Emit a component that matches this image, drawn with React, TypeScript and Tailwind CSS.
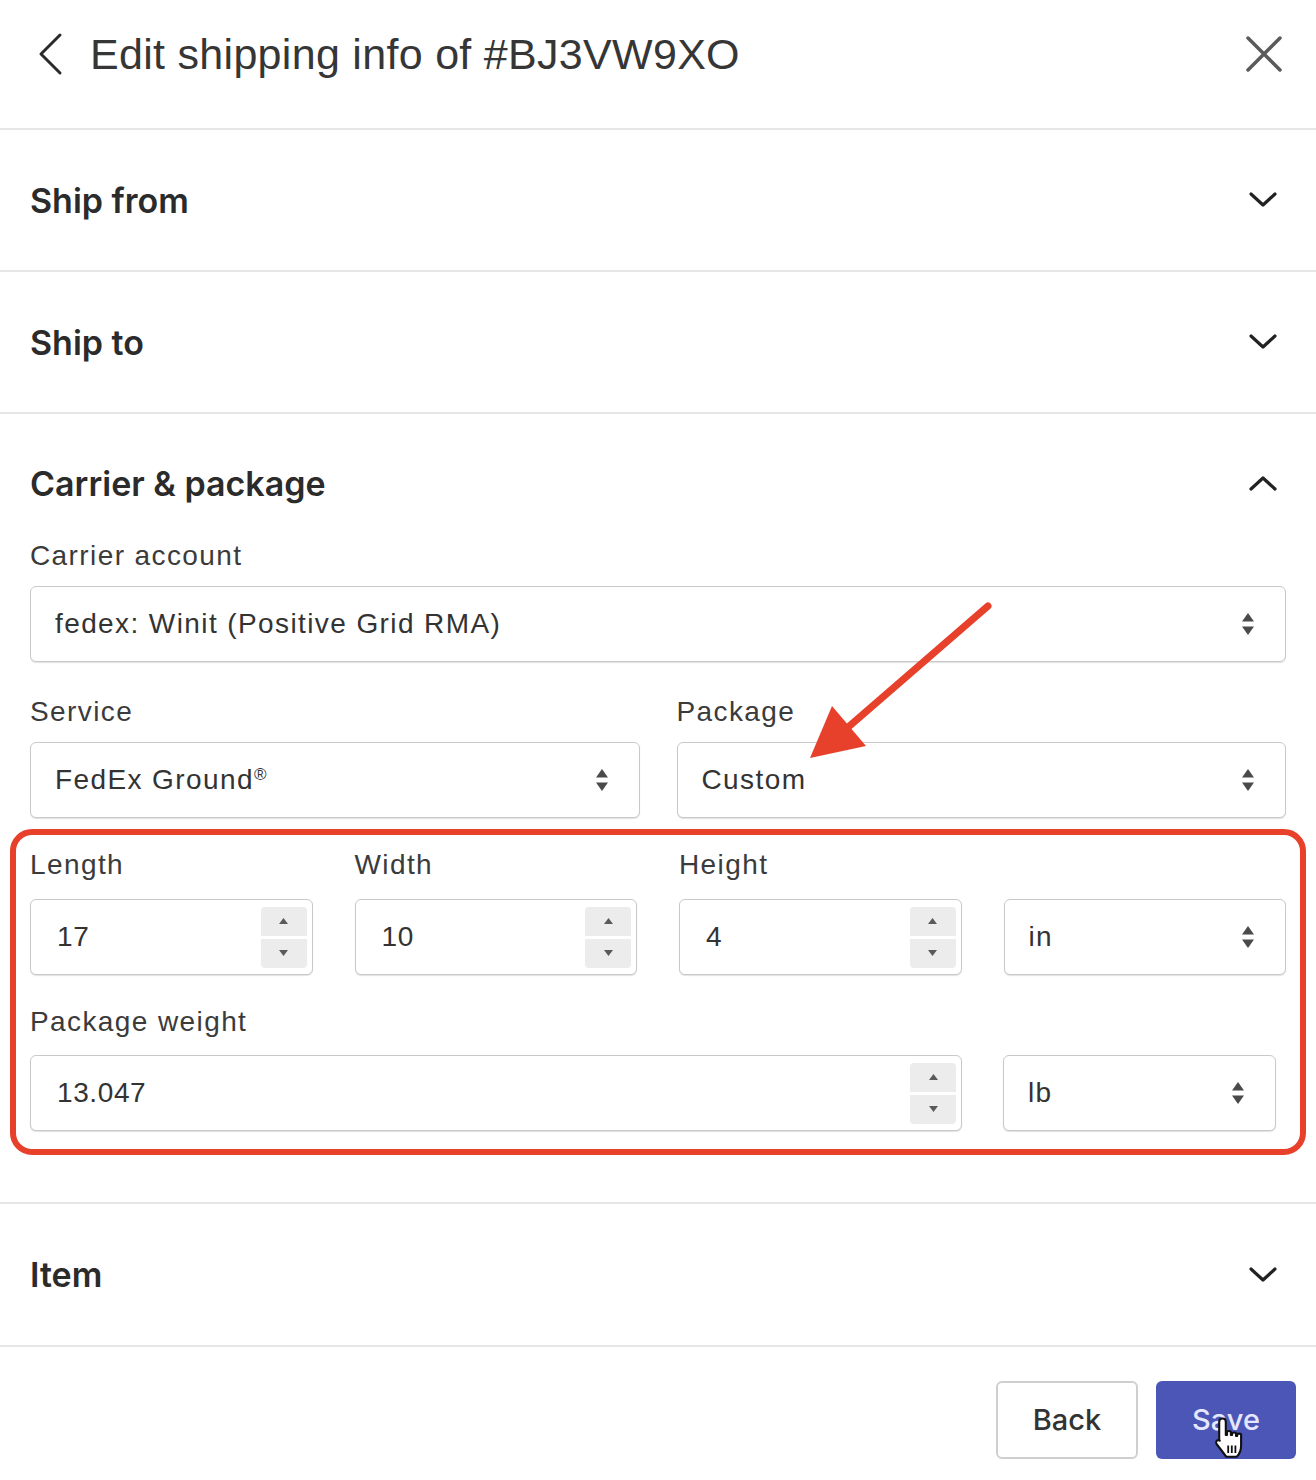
import { ReactNode } from "react";

const sans = "font-['Liberation_Sans',Arial,sans-serif]";
const heavy = "font-['Inter','Liberation_Sans',sans-serif]";

function Chevron({ up = false }: { up?: boolean }) {
    return (
        <svg width="30" height="18" viewBox="0 0 30 18" className="text-[#222]">
            <path d={up ? "M3 15 L15 4 L27 15" : "M3 3 L15 14 L27 3"} fill="none" stroke="currentColor" strokeWidth="3.2" strokeLinecap="round" strokeLinejoin="round" />
        </svg>
    );
}

function SelectArrows() {
    return (
        <svg width="14" height="24" viewBox="0 0 14 24" className="text-[#4a4a4a]">
            <path d="M7 1 L13 9.5 H1 Z" fill="currentColor" />
            <path d="M7 23 L13 14.5 H1 Z" fill="currentColor" />
        </svg>
    );
}

function Label({ children }: { children: ReactNode }) {
    return <div className={`${sans} text-[28px] leading-[36px] text-[#3b3b3b] tracking-[1.4px]`}>{children}</div>;
}

function Select({ value, className = "" }: { value: ReactNode; className?: string }) {
    return (
        <div className={`flex items-center justify-between h-[76px] pl-[24px] pr-[30px] bg-white border-[1.5px] border-[#c9c9c9] rounded-[6px] shadow-[0_1px_1px_rgba(0,0,0,0.12)] ${className}`}>
            <span className={`${sans} text-[28px] text-[#333] tracking-[1.4px]`}>{value}</span>
            <SelectArrows />
        </div>
    );
}

function NumberInput({ value, className = "" }: { value: string; className?: string }) {
    return (
        <div className={`flex items-center justify-between h-[76px] pl-[26px] pr-[5px] bg-white border-[1.5px] border-[#c9c9c9] rounded-[6px] shadow-[0_1px_1px_rgba(0,0,0,0.12)] ${className}`}>
            <span className={`${sans} text-[28px] text-[#333] tracking-[0.6px]`}>{value}</span>
            <div className="flex flex-col gap-[3px] w-[46px]">
                <div className="h-[29px] bg-[#ececec] rounded-t-[4px] flex items-center justify-center">
                    <svg width="9" height="6" viewBox="0 0 9 6"><path d="M4.5 0 L9 6 H0 Z" fill="#5a5a5a" /></svg>
                </div>
                <div className="h-[29px] bg-[#ececec] rounded-b-[4px] flex items-center justify-center">
                    <svg width="9" height="6" viewBox="0 0 9 6"><path d="M4.5 6 L9 0 H0 Z" fill="#5a5a5a" /></svg>
                </div>
            </div>
        </div>
    );
}

function Collapsed({ title, h = "h-[142px]" }: { title: string; h?: string }) {
    return (
        <div className={`${h} flex items-center justify-between pl-[30px] pr-[38px] border-b-2 border-[#e6e6e6]`}>
            <span className={`${heavy} font-semibold text-[34px] text-[#2b2b2b]`}>{title}</span>
            <Chevron />
        </div>
    );
}

export default function App() {
    return (
        <div className="relative w-[1316px] h-[1480px] bg-white overflow-hidden">
            {/* header */}
            <div className="h-[130px] flex items-center justify-between pb-[20px] pl-[36px] pr-[32px] border-b-2 border-[#e6e6e6]">
                <div className="flex items-center gap-[26px]">
                    <svg width="28" height="44" viewBox="0 0 28 44" className="text-[#2a2a2a]">
                        <path d="M24 3 L5 22 L24 41" fill="none" stroke="currentColor" strokeWidth="3" strokeLinecap="round" strokeLinejoin="round" />
                    </svg>
                    <h1 className={`${sans} text-[43px] text-[#363636] tracking-[0.3px]`}>Edit shipping info of #BJ3VW9XO</h1>
                </div>
                <svg width="40" height="40" viewBox="0 0 40 40" className="text-[#5a5a5a]">
                    <path d="M4 4 L36 36 M36 4 L4 36" fill="none" stroke="currentColor" strokeWidth="3.5" strokeLinecap="round" />
                </svg>
            </div>

            <Collapsed title="Ship from" />
            <Collapsed title="Ship to" />

            {/* carrier & package */}
            <div className="px-[30px] pt-[34px] pb-[47px] border-b-2 border-[#e6e6e6]">
                <div className="h-[70px] flex items-center justify-between pr-[8px]">
                    <span className={`${heavy} font-semibold text-[34px] text-[#2b2b2b]`}>Carrier &amp; package</span>
                    <Chevron up />
                </div>
                <div className="mt-[20px]">
                    <Label>Carrier account</Label>
                    <Select value="fedex: Winit (Positive Grid RMA)" className="mt-[12px]" />
                </div>
                <div className="mt-[32px] grid grid-cols-2 gap-x-[37px]">
                    <div>
                        <Label>Service</Label>
                        <Select value={<>FedEx Ground<span className="text-[17px] align-[9px]">®</span></>} className="mt-[12px]" />
                    </div>
                    <div>
                        <Label>Package</Label>
                        <Select value="Custom" className="mt-[12px]" />
                    </div>
                </div>

                <div className="mt-[11px] -mx-[20px] px-[14px] pt-[12px] pb-[18px] border-[6px] border-[#e8412b] rounded-[22px]">
                    <div className="grid grid-cols-4 gap-x-[42px]">
                        <div>
                            <Label>Length</Label>
                            <NumberInput value="17" className="mt-[16px]" />
                        </div>
                        <div>
                            <Label>Width</Label>
                            <NumberInput value="10" className="mt-[16px]" />
                        </div>
                        <div>
                            <Label>Height</Label>
                            <NumberInput value="4" className="mt-[16px]" />
                        </div>
                        <div className="flex flex-col justify-end">
                            <Select value="in" />
                        </div>
                    </div>
                    <div className="mt-[29px]">
                        <Label>Package weight</Label>
                        <div className="mt-[15px] flex gap-[41px]">
                            <NumberInput value="13.047" className="w-[932px]" />
                            <Select value="lb" className="w-[273px]" />
                        </div>
                    </div>
                </div>
            </div>

            <Collapsed title="Item" h="h-[143px]" />

            {/* footer */}
            <div className="flex justify-end gap-[18px] pr-[20px] pt-[34px]">
                <button className={`${heavy} w-[142px] h-[78px] rounded-[6px] border-2 border-[#cfcfcf] bg-white text-[29px] font-medium text-[#333]`}>Back</button>
                <button className={`${heavy} relative w-[140px] h-[78px] rounded-[6px] bg-[#4b56b6] text-[29px] font-medium text-[#e4e7ff]`}>
                    Save
                    <svg width="36" height="46" viewBox="0 0 24 30" className="absolute left-[56px] top-[34px]">
                        <path d="M7 2 C8.3 2 9.2 3 9.2 4.2 V13 L10 13 V11.2 C10 10 12.6 10 12.6 11.2 V13 L13.4 13 V12.2 C13.4 11 16 11 16 12.2 V13.6 L16.8 13.6 V13 C16.8 11.8 19.4 11.8 19.4 13 V20 C19.4 23.5 18 26 16.5 27.5 H9.5 C8 25.5 5 21.5 3 19 C2 17.6 3.5 15.6 5.2 16.8 L4.8 16.5 V4.2 C4.8 3 5.7 2 7 2 Z" fill="#fff" stroke="#111" strokeWidth="1.4" strokeLinejoin="round" />
                        <path d="M10.8 20 V25 M13.2 20 V25 M15.6 20 V25" stroke="#111" strokeWidth="1.2" />
                    </svg>
                </button>
            </div>

            {/* annotation arrow */}
            <svg className="absolute left-0 top-0 pointer-events-none" width="1316" height="1480">
                <line x1="988" y1="606" x2="846" y2="729" stroke="#e8412b" strokeWidth="7" strokeLinecap="round" />
                <path d="M810 758 L832 706 L866 746 Z" fill="#e8412b" />
            </svg>
        </div>
    );
}
